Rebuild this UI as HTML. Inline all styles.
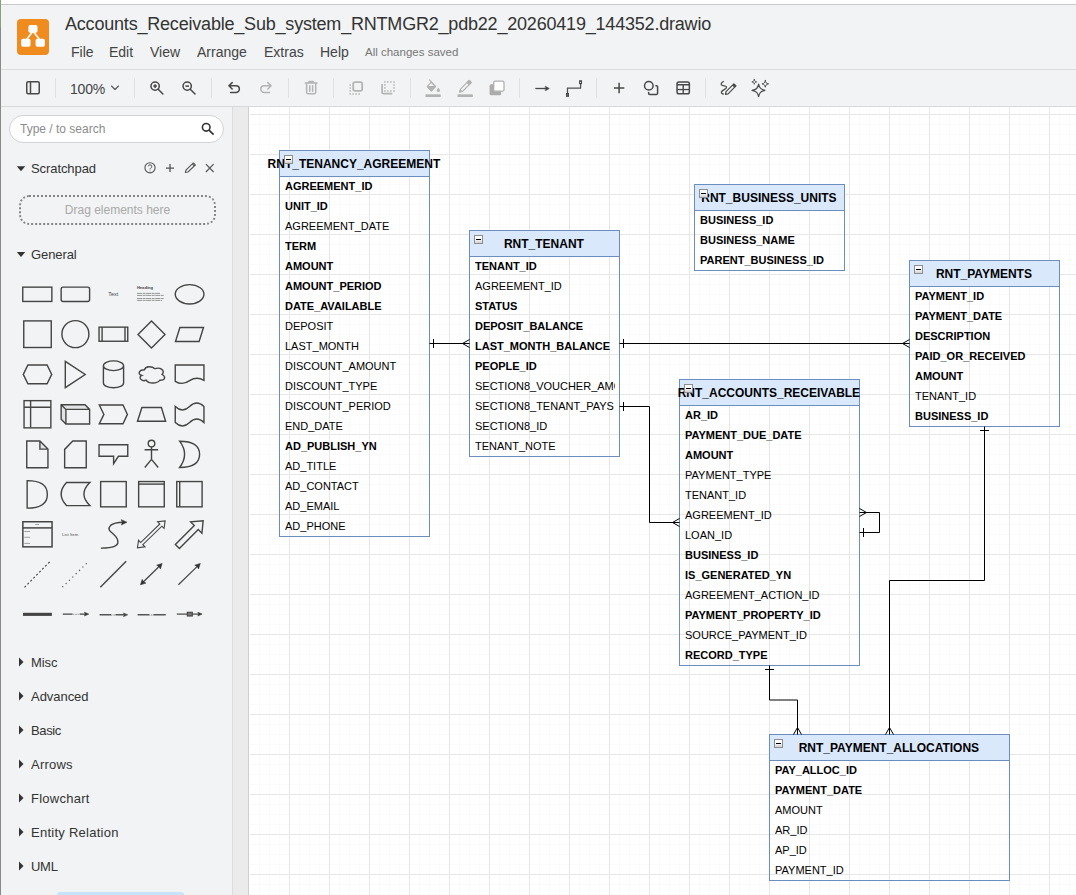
<!DOCTYPE html>
<html><head><meta charset="utf-8"><title>draw.io</title>
<style>
html,body{margin:0;padding:0}
body{width:1076px;height:895px;position:relative;overflow:hidden;background:#fff;font-family:"Liberation Sans",sans-serif;color:#000}
.abs{position:absolute}
#topline{left:0;top:4px;width:1076px;height:1px;background:#c9c9c9}
#leftcol{left:0;top:0;width:1px;height:895px;background:linear-gradient(#86a178 27px,#8a8a8a 28px)}
#wcol{left:249px;top:107px;width:1px;height:788px;background:#fff}
#hdr{left:1px;top:5px;width:1075px;height:64px;background:#f1f3f4}
#hline{left:1px;top:69px;width:1075px;height:1px;background:#dcdcdc}
#tbar{left:1px;top:70px;width:1075px;height:36px;background:#f1f3f4}
#tline{left:1px;top:106px;width:1075px;height:1px;background:#d9d9d9}
#side{left:1px;top:107px;width:231px;height:788px;background:#f1f3f4}
#sideb{left:232px;top:107px;width:1px;height:788px;background:#dcdcdc}
#split{left:233px;top:107px;width:15px;height:788px;background:#ebebeb}
#pgb{left:248px;top:107px;width:1px;height:788px;background:#cfcfcf}
#cv{left:249px;top:107px;width:827px;height:788px;background-color:#fff;
 background-image:linear-gradient(to right,#e7e7e7 1px,transparent 1px),linear-gradient(to bottom,#e7e7e7 1px,transparent 1px),linear-gradient(to right,#fbfbfb 1px,transparent 1px),linear-gradient(to bottom,#fbfbfb 1px,transparent 1px);
 background-size:40px 40px,40px 40px,10px 10px,10px 10px;
 background-position:0 7px,0 7px,0 7px,0 7px;}
#logo{left:17px;top:19px;width:32px;height:36px;background:#f08c1e;border-radius:4px}
#title{left:65px;top:13px;font-size:18px;letter-spacing:-0.2px;line-height:22px;color:#333;white-space:nowrap}
.mi{position:absolute;top:43px;font-size:14px;line-height:18px;color:#444;white-space:nowrap}
#saved{left:365px;top:45px;font-size:11.5px;line-height:14px;color:#777;white-space:nowrap}
.sep{position:absolute;top:78px;width:1px;height:20px;background:#dcdcdc}
.ic{position:absolute;overflow:visible}
.sl{position:absolute;left:31px;font-size:13px;line-height:16px;color:#333;white-space:nowrap}
/* tables */
.tb{position:absolute;box-sizing:border-box;border:1px solid #6c8ebf}
.th{position:absolute;left:0;top:0;height:25px;background:#dae8fc;border-bottom:1px solid #6c8ebf}
.tt{position:absolute;left:-1px;transform:translateX(-0.6px);top:0;height:26px;line-height:26px;font-size:12px;font-weight:bold;display:flex;justify-content:center;white-space:nowrap}
.tr{position:absolute;left:5px;height:20px;line-height:20px;font-size:11px;white-space:nowrap;overflow:hidden}
.tr.b{font-weight:bold}
.ci{position:absolute;left:4px;top:4px;width:9px;height:9px;box-sizing:border-box;border:1px solid #8e8e8e;background:linear-gradient(#fff,#fdfdfd 45%,#cfcfcf)}
.ci i{position:absolute;left:1px;top:3px;width:5px;height:1px;background:#000}
</style></head>
<body>
<div class="abs" id="topline"></div>
<div class="abs" id="hdr"></div>
<div class="abs" id="hline"></div>
<div class="abs" id="tbar"></div>
<div class="abs" id="tline"></div>
<div class="abs" id="side"></div>
<div class="abs" id="sideb"></div>
<div class="abs" id="split"></div>
<div class="abs" id="pgb"></div>
<div class="abs" id="cv"></div>
<div class="abs" id="leftcol"></div>
<div class="abs" id="wcol"></div>

<!-- header -->
<div class="abs" id="logo"></div>
<svg class="abs" style="left:17px;top:19px" width="32" height="36" viewBox="17 19 32 36"><path d="M32.3 32L26.6 39.5M33.7 32L39.6 39.5" stroke="#fff" stroke-width="1.6" fill="none"/><rect x="28.4" y="25" width="9.1" height="7.8" rx="1.8" fill="#fff"/><rect x="21.2" y="38.8" width="9.3" height="8" rx="1.8" fill="#fff"/><rect x="35.6" y="38.8" width="9.3" height="8" rx="1.8" fill="#fff"/></svg>
<div class="abs" id="title">Accounts_Receivable_Sub_system_RNTMGR2_pdb22_20260419_144352.drawio</div>
<div class="mi" style="left:71px">File</div>
<div class="mi" style="left:109px">Edit</div>
<div class="mi" style="left:150px">View</div>
<div class="mi" style="left:197px">Arrange</div>
<div class="mi" style="left:264px">Extras</div>
<div class="mi" style="left:320px">Help</div>
<div class="abs" id="saved">All changes saved</div>

<!-- toolbar -->
<svg class="abs" style="left:0;top:70px" width="1076" height="37" viewBox="0 70 1076 37" fill="none" stroke="#484848" stroke-width="1.5" stroke-linecap="round" stroke-linejoin="round">
<g stroke="#e1e1e1" stroke-width="1" stroke-linecap="butt">
<path d="M55.5 78V98M134.5 78V98M211.5 78V98M288.5 78V98M333.5 78V98M410.5 78V98M519.5 78V98M596.5 78V98M705.5 78V98"/>
</g>
<!-- sidebar toggle -->
<rect x="26.75" y="81.75" width="12.5" height="12" rx="1.5"/><path d="M30.5 82V93.5" stroke-linecap="butt"/>
<!-- chevron -->
<path d="M111.5 86L115 89.5L118.5 86" stroke-width="1.1" stroke="#555"/>
<!-- zoom in -->
<circle cx="155.1" cy="86.1" r="4.15"/><path d="M158.2 89.2L162.9 94"/><path d="M153.3 86.1H156.9M155.1 84.3V87.9" stroke-width="1.5" stroke-linecap="butt"/>
<!-- zoom out -->
<circle cx="187.2" cy="86.1" r="4.15"/><path d="M190.3 89.2L195 94"/><path d="M185.4 86.1H189" stroke-width="1.5" stroke-linecap="butt"/>
<!-- undo -->
<path d="M232.2 82.6L228.9 85.8L232.2 89M229 85.8H236A3.35 3.35 0 0 1 236 92.5H230.6"/>
<!-- redo -->
<g stroke="#b4b4b4"><path d="M267.8 82.6L271.1 85.8L267.8 89M271 85.8H264.2A3.35 3.35 0 0 0 264.2 92.5H269.6"/></g>
<!-- trash -->
<g stroke="#b4b4b4"><path d="M305.3 83H317M309 82.8V81.6H313.3V82.8M306.6 83.4V92.3A1.4 1.4 0 0 0 308 93.7H314.3A1.4 1.4 0 0 0 315.7 92.3V83.4M309.7 85.8V91.2M312.6 85.8V91.2"/></g>
<!-- to front -->
<g stroke="#b4b4b4" stroke-width="1.8"><rect x="353.2" y="82.1" width="9" height="8.8" rx="1.8"/><g fill="#b4b4b4" stroke="none"><rect x="349.45" y="84.35" width="1.5" height="1.5"/><rect x="349.45" y="87.30" width="1.5" height="1.5"/><rect x="349.45" y="90.25" width="1.5" height="1.5"/><rect x="349.45" y="93.25" width="1.5" height="1.5"/><rect x="352.35" y="93.25" width="1.5" height="1.5"/><rect x="355.35" y="93.25" width="1.5" height="1.5"/><rect x="358.45" y="93.25" width="1.5" height="1.5"/></g></g>
<!-- to back -->
<g stroke="#b4b4b4" stroke-width="1.7"><path d="M382.1 84.6V92.2A1.4 1.4 0 0 0 383.5 93.6H391.6"/><g fill="#b4b4b4" stroke="none"><rect x="384.15" y="81.15" width="1.5" height="1.5"/><rect x="384.15" y="84.15" width="1.5" height="1.5"/><rect x="384.15" y="87.15" width="1.5" height="1.5"/><rect x="384.15" y="90.25" width="1.5" height="1.5"/><rect x="387.15" y="81.15" width="1.5" height="1.5"/><rect x="387.15" y="90.25" width="1.5" height="1.5"/><rect x="390.15" y="81.15" width="1.5" height="1.5"/><rect x="390.15" y="90.25" width="1.5" height="1.5"/><rect x="393.25" y="81.15" width="1.5" height="1.5"/><rect x="393.25" y="84.15" width="1.5" height="1.5"/><rect x="393.25" y="87.15" width="1.5" height="1.5"/><rect x="393.25" y="90.25" width="1.5" height="1.5"/></g></g>
<!-- fill colour -->
<g stroke="#b2b2b2" stroke-width="1.2" stroke-linejoin="round"><rect x="425.5" y="94.3" width="15.2" height="2.7" fill="#b2b2b2" stroke="none"/><path d="M431.4 82.1L435.3 86.3L431.4 90.8L427.4 86.3Z"/><path d="M427.4 86.5H435.3L431.4 90.8Z" fill="#b2b2b2"/><path d="M429.2 79.6L435.3 86.3" stroke-linecap="butt"/><path d="M438.4 87.7s-1.6 1.8-1.6 2.8a1.6 1.6 0 0 0 3.2 0c0-1-1.6-2.8-1.6-2.8z" fill="#b2b2b2" stroke="none"/></g>
<!-- line colour -->
<g stroke="#b2b2b2" stroke-width="1.1" stroke-linejoin="round"><rect x="457.6" y="94.3" width="15.2" height="2.7" fill="#b2b2b2" stroke="none"/><g transform="translate(459.5 92.3) rotate(-45.5)"><path d="M0.3 0L3 -1.55H14.5A0.8 0.8 0 0 1 15.3 -0.75V0.75A0.8 0.8 0 0 1 14.5 1.55H3Z"/><path d="M0.3 0L2.2 -1.1V1.1Z" fill="#b2b2b2"/><path d="M12.2 -1.55H15.3V1.55H12.2Z" fill="#b2b2b2"/></g></g>
<!-- shadow -->
<g stroke="none"><rect x="489.6" y="84.2" width="11.5" height="11" rx="1.5" fill="#acacac"/><rect x="493.7" y="81.2" width="10.3" height="10" rx="1.5" fill="#fff" stroke="#b0b0b0" stroke-width="1.3"/></g>
<!-- arrow -->
<path d="M535.3 88.5H548" stroke-linecap="butt" stroke-width="1.3"/><path d="M545.6 86.3L549.3 88.5L545.6 90.7Z" fill="#444" stroke-width="0.5"/>
<!-- waypoints -->
<path d="M567.5 93.4V88.1H580.6V84" stroke-linecap="butt" stroke-linejoin="miter" stroke-width="1.25" stroke="#505050"/><rect x="566.55" y="93.5" width="1.9" height="2.8" stroke-width="1.1" stroke-linejoin="miter"/><rect x="579.6" y="80.8" width="1.9" height="2.8" stroke-width="1.1" stroke-linejoin="miter"/>
<!-- plus -->
<path d="M613.9 88H624.3M619.1 82.7V93.3" stroke-linecap="butt"/>
<!-- shapes -->
<circle cx="648.8" cy="85.8" r="4.3"/><path d="M648.6 92.6V93.2A1.2 1.2 0 0 0 649.8 94.4H656.4A1.2 1.2 0 0 0 657.6 93.2V86.9A1.2 1.2 0 0 0 656.4 85.7H655.9"/>
<!-- table -->
<rect x="677.05" y="81.95" width="12.3" height="11.9" rx="1.8"/><path d="M677.1 84.75H689.3M683.2 84.75V93.8" stroke-linecap="butt" stroke-width="1.4"/><path d="M677.1 89.55H689.3" stroke-linecap="butt" stroke-width="1.3"/>
<!-- freehand -->
<path d="M723.3 81.5C721.5 82.5 720.6 84 721.6 85C723 86.3 726.3 85.5 726.6 87.2C727 89 721.6 90 721.4 92C721.3 93.3 722.3 94 723.3 94" stroke-width="1.3"/>
<path d="M725.5 94.3l0.5-2.6 6.6-6.6 2.1 2.1-6.6 6.6z" stroke-width="1.2"/><path d="M733.2 84.5l0.7-0.7 2.1 2.1-0.7 0.7z" stroke-width="1.2" fill="#444"/>
<!-- sparkle -->
<path d="M758.6 84.2C759.4 88.2 760.8 89.5 764.9 90.4C760.8 91.3 759.4 92.6 758.6 96.7C757.8 92.6 756.4 91.3 752.1 90.4C756.4 89.5 757.8 88.2 758.6 84.2Z" stroke-width="1.2"/>
<path d="M765.3 80.6C765.7 82.8 766.3 83.4 768.5 83.9C766.3 84.4 765.7 85 765.3 87.2C764.9 85 764.3 84.4 762.1 83.9C764.3 83.4 764.9 82.8 765.3 80.6Z" stroke-width="1"/>
<path d="M754.3 79.5C754.6 81.1 755 81.5 756.7 81.9C755 82.3 754.6 82.7 754.3 84.3C754 82.7 753.6 82.3 751.9 81.9C753.6 81.5 754 81.1 754.3 79.5Z" stroke-width="0.9"/>
</svg>
<div class="abs" style="left:70px;top:80px;font-size:14px;line-height:18px;color:#444;letter-spacing:-0.2px">100%</div>

<!-- sidebar -->
<div class="abs" style="left:9px;top:115px;width:215px;height:28px;box-sizing:border-box;border:1px solid #d4d4d4;border-radius:14px;background:#fff"></div>
<div class="abs" style="left:20px;top:122px;font-size:12px;line-height:14px;color:#8c8c8c;white-space:nowrap">Type / to search</div>
<div class="sl" style="top:161px;letter-spacing:-0.08px">Scratchpad</div>
<div class="abs" style="left:19px;top:195px;width:197px;height:30px;box-sizing:border-box;border:2px dotted #858585;border-radius:10px"></div>
<div class="abs" style="left:19px;top:203px;width:197px;text-align:center;font-size:12px;line-height:14px;color:#a9a9a9;white-space:nowrap">Drag elements here</div>
<div class="sl" style="top:247px;letter-spacing:-0.09px">General</div>
<div class="sl" style="top:655px;letter-spacing:-0.08px">Misc</div>
<div class="sl" style="top:689px;letter-spacing:-0.04px">Advanced</div>
<div class="sl" style="top:723px;letter-spacing:-0.36px">Basic</div>
<div class="sl" style="top:757px;letter-spacing:0.22px">Arrows</div>
<div class="sl" style="top:791px;letter-spacing:0.26px">Flowchart</div>
<div class="sl" style="top:825px;letter-spacing:0.26px">Entity Relation</div>
<div class="sl" style="top:859px;letter-spacing:-0.28px">UML</div>
<div class="abs" style="left:57px;top:892px;width:127px;height:6px;background:#c6e3fa;border-radius:3px"></div>
<svg class="abs" style="left:0;top:107px" width="232" height="788" viewBox="0 107 232 788" fill="none" stroke="#444" stroke-width="1.4" font-family="Liberation Sans, sans-serif">
<!-- search icon -->
<circle cx="206.2" cy="127.3" r="3.8" stroke="#333" stroke-width="1.6"/><path d="M209 130.1L213.6 134.6" stroke="#333" stroke-width="1.7"/>
<!-- section arrows -->
<g fill="#333" stroke="none">
<path d="M16.8 166.2H25.2L21 171.3Z"/><path d="M16.8 252H25.2L21 257.1Z"/>
<path d="M19 657.5L23.5 662L19 666.5Z"/><path d="M19 691.5L23.5 696L19 700.5Z"/><path d="M19 725.5L23.5 730L19 734.5Z"/><path d="M19 759.5L23.5 764L19 768.5Z"/><path d="M19 793.5L23.5 798L19 802.5Z"/><path d="M19 827.5L23.5 832L19 836.5Z"/><path d="M19 861.5L23.5 866L19 870.5Z"/>
</g>
<!-- scratchpad icons -->
<g stroke="#555" stroke-width="1.1">
<circle cx="150" cy="167.8" r="5.1"/><path d="M148.3 166.3A1.75 1.75 0 1 1 150.6 168.2Q150 168.5 150 169.4M150 170.6V171.3" stroke-width="1"/>
<path d="M166 168.1H174M170 164.1V172.1" stroke-width="1.3"/>
<path d="M185.4 172.4L186 170L193.3 162.9L195.4 165L188 172Z M192.3 163.9L194.4 166" stroke-width="1.1"/>
<path d="M205.9 164.2L213.6 172M213.6 164.2L205.9 172" stroke-width="1.2"/>
</g>
<!-- row 1 -->
<rect x="22.75" y="287.15" width="29.1" height="14.3"/>
<rect x="61.15" y="287.15" width="28.45" height="14.3" rx="2"/>
<text x="113.2" y="296" font-size="5.4" text-anchor="middle" fill="#444" stroke="none">Text</text>
<text x="136.9" y="288.6" font-size="4.1" font-weight="bold" fill="#444" stroke="none">Heading</text>
<path d="M137 293.4H160M137 295.4H163.7M137 298.5H163.7M137 300.4H162" stroke="#707070" stroke-width="0.7" stroke-dasharray="5 0.6 3 0.5"/>
<ellipse cx="189.6" cy="294.3" rx="14.35" ry="9.65"/>
<!-- row 2 -->
<rect x="23.75" y="320.9" width="27.5" height="26.6"/>
<circle cx="75.4" cy="334.1" r="13.5"/>
<rect x="99.05" y="327.15" width="28.7" height="14.1"/><path d="M102.1 327.2V341.2M125 327.2V341.2"/>
<path d="M151.5 320.9L165 334.4L151.5 347.9L138 334.4Z"/>
<path d="M179.9 327.55H203.5L199.1 341.45H175.5Z"/>
<!-- row 3 -->
<path d="M23.3 374.4L27.9 365.05H47.1L51.7 374.4L47.1 383.75H27.9Z"/>
<path d="M65.3 361.4L85.2 374.5L65.3 387.6Z"/>
<path d="M103.4 365.75A10.1 4.85 0 0 1 123.6 365.75V382.9A10.1 4.85 0 0 1 103.4 382.9ZM103.4 365.75A10.1 4.85 0 0 0 123.6 365.75"/>
<path d="M144.4 369.7C138.7 369.7 137.3 374.5 141.8 375.4C137.3 377.5 142.4 382.1 146.1 380.2C148.6 384.0 157.1 384.0 160.0 380.2C165.7 380.2 165.7 376.4 162.1 374.5C165.7 370.6 160.0 366.8 155.0 368.7C151.5 365.9 145.8 365.9 144.4 369.7Z"/>
<path d="M175.25 365.05H203.95V380.3Q196.8 376 189.6 380.6Q182.4 385.8 175.25 381.3Z"/>
<!-- row 4 -->
<rect x="24.05" y="400.65" width="26.8" height="27.2"/><path d="M30.6 400.7V427.8M24.1 407.25H50.8"/>
<path d="M61.15 404.75L65.9 409.4H89.6L85 404.75ZM61.15 404.75L65.9 409.4V423.95L61.15 419.3Z" fill="#e3e4e5" stroke="none"/>
<path d="M61.15 404.75H85L89.6 409.4V423.95H65.9L61.15 419.3ZM61.15 404.75L65.9 409.4H89.6M65.9 409.4V423.95"/>
<path d="M99.3 405.05H123L127.4 414.4L123 423.75H99.3L103.9 414.4Z"/>
<path d="M137.5 421.25L141.9 407.55H161.4L165.6 421.25Z"/>
<path d="M175.25 406.5Q182.4 413.5 189.6 406.5Q196.8 399.5 203.95 406.5V422.5Q196.8 415.5 189.6 422.5Q182.4 429.5 175.25 422.5Z"/>
<!-- row 5 -->
<path d="M39.9 441.05V449.1H47.95Z" fill="#e3e4e5" stroke="none"/>
<path d="M26.75 441.05H39.9L47.95 449.1V467.75H26.75ZM39.9 441.05V449.1H47.95"/>
<path d="M72.75 441.05H86.25V467.75H64.65V449.4Z"/>
<path d="M99.05 444.75H127.75V456.3H118.4L113.6 463.6V456.3H99.05Z"/>
<circle cx="151.5" cy="443.6" r="3.3"/><path d="M151.5 446.9V459.4M144.6 449.75H158.1M151.5 459.4L144.8 467.5M151.5 459.4L158.2 467.5"/>
<path d="M179.6 441.2Q199.6 441.2 199.6 454.35Q199.6 467.5 179.6 467.5Q189.6 454.35 179.6 441.2Z"/>
<!-- row 6 -->
<path d="M27.15 480.65Q47.35 480.65 47.35 494.4Q47.35 508.1 27.15 508.1Z"/>
<path d="M66.5 482.55H89.85Q78 494.1 89.85 505.6H66.5Q55.8 494.1 66.5 482.55Z"/>
<rect x="100.65" y="481.55" width="25.6" height="25.3"/>
<rect x="138.65" y="481.55" width="25.6" height="25.3"/><path d="M138.7 484.1H164.2"/>
<rect x="176.75" y="481.55" width="25.35" height="25.3"/><path d="M179.7 481.6V506.8"/>
<!-- row 7 -->
<rect x="22.85" y="521.75" width="29.2" height="25.1" stroke-width="1.5"/><path d="M22.9 527.9H52" stroke-width="1.5"/>
<path d="M35.3 524.5H39M24.3 531.5H30M24.3 537.3H30M24.3 543.4H30" stroke="#666" stroke-width="0.6"/>
<text x="62" y="535.7" font-size="4.3" fill="#555" stroke="none">List Item</text>
<path d="M100.9 548.1C112 548.1 120.5 546.5 117.3 539C114.6 532.8 105.2 530.8 110.6 525.4C113.6 522.8 119 522.4 123.5 522.3"/>
<path d="M126.9 522.2L121.2 519.7L122.5 522.3L121.4 524.9Z" fill="#333" stroke="#333" stroke-width="0.6"/>
<g transform="translate(151.3 534.35) rotate(-44.1)"><path d="M-19.3 0L-13.3 -4.6V-1.5H13.3V-4.6L19.3 0L13.3 4.6V1.5H-13.3V4.6Z" stroke-width="1.1"/></g>
<g transform="translate(177.4 546.45) rotate(-45)"><path d="M0 -2.8H26.7V-8L36.4 0L26.7 8V2.8H0Z"/></g>
<!-- row 8 -->
<path d="M24.5 587.3L50 561.5" stroke-dasharray="2 2.2" stroke-width="1.15"/>
<path d="M62.4 587.2L86.7 563.3" stroke-dasharray="1.1 3.6" stroke-width="1.15"/>
<path d="M100.3 587.2L126.2 561.3"/>
<path d="M143 582.3L159.6 566" stroke-width="1.2"/><path d="M140.5 584.75L142.2 579.4L143.5 581.8L145.9 583.1Z M162.1 563.5L160.4 568.9L159.1 566.5L156.7 565.2Z" fill="#333" stroke="#333" stroke-width="0.6"/>
<path d="M178.4 584.75L197.8 565.9" stroke-width="1.2"/><path d="M200.25 563.5L198.5 568.9L197.2 566.5L194.8 565.2Z" fill="#333" stroke="#333" stroke-width="0.6"/>
<!-- row 9 -->
<rect x="23" y="612.8" width="28.9" height="3.1" fill="#444" stroke="none"/>
<path d="M62.8 614.1H72.6M79.6 614.1H86" stroke-width="1.2"/><path d="M73.2 614.3H79" stroke="#888" stroke-width="0.9" stroke-dasharray="1 0.5"/><path d="M88.8 614.1L84.4 612.2L85.4 614.1L84.4 616Z" fill="#333" stroke="#333" stroke-width="0.5"/>
<path d="M99.6 614.8H111M115.5 614.8H125" stroke="#555" stroke-width="1.5"/><path d="M111 615H115.5" stroke="#777" stroke-width="0.9" stroke-dasharray="1 0.6"/><path d="M127.8 614.8L123.4 612.9L124.4 614.8L123.4 616.7Z" fill="#444" stroke="#444" stroke-width="0.5"/>
<path d="M137.6 614.8H149.3M153.5 614.8H165.7" stroke="#555" stroke-width="1.5"/><path d="M149.3 615H153.5" stroke="#777" stroke-width="0.9" stroke-dasharray="1 0.6"/>
<path d="M176.8 614.1H199" stroke-width="1.2"/><rect x="187.3" y="612.3" width="5" height="3.7" fill="#777" stroke-width="1.1"/><path d="M202.2 614.1L197.8 612.2L198.8 614.1L197.8 616Z" fill="#333" stroke="#333" stroke-width="0.5"/>
</svg>


<!-- diagram -->
<div class="tb" style="left:279px;top:150px;width:151px;height:387px">
<div class="th" style="width:149px"></div>
<div class="tt" style="width:151px">RNT_TENANCY_AGREEMENT</div>
<div class="ci"><i></i></div>
<div class="tr b" style="top:25px;width:140px">AGREEMENT_ID</div>
<div class="tr b" style="top:45px;width:140px">UNIT_ID</div>
<div class="tr" style="top:65px;width:140px">AGREEMENT_DATE</div>
<div class="tr b" style="top:85px;width:140px">TERM</div>
<div class="tr b" style="top:105px;width:140px">AMOUNT</div>
<div class="tr b" style="top:125px;width:140px">AMOUNT_PERIOD</div>
<div class="tr b" style="top:145px;width:140px">DATE_AVAILABLE</div>
<div class="tr" style="top:165px;width:140px">DEPOSIT</div>
<div class="tr" style="top:185px;width:140px">LAST_MONTH</div>
<div class="tr" style="top:205px;width:140px">DISCOUNT_AMOUNT</div>
<div class="tr" style="top:225px;width:140px">DISCOUNT_TYPE</div>
<div class="tr" style="top:245px;width:140px">DISCOUNT_PERIOD</div>
<div class="tr" style="top:265px;width:140px">END_DATE</div>
<div class="tr b" style="top:285px;width:140px">AD_PUBLISH_YN</div>
<div class="tr" style="top:305px;width:140px">AD_TITLE</div>
<div class="tr" style="top:325px;width:140px">AD_CONTACT</div>
<div class="tr" style="top:345px;width:140px">AD_EMAIL</div>
<div class="tr" style="top:365px;width:140px">AD_PHONE</div>
</div>
<div class="tb" style="left:469px;top:230px;width:151px;height:227px">
<div class="th" style="width:149px"></div>
<div class="tt" style="width:151px">RNT_TENANT</div>
<div class="ci"><i></i></div>
<div class="tr b" style="top:25px;width:140px">TENANT_ID</div>
<div class="tr" style="top:45px;width:140px">AGREEMENT_ID</div>
<div class="tr b" style="top:65px;width:140px">STATUS</div>
<div class="tr b" style="top:85px;width:140px">DEPOSIT_BALANCE</div>
<div class="tr b" style="top:105px;width:140px">LAST_MONTH_BALANCE</div>
<div class="tr b" style="top:125px;width:140px">PEOPLE_ID</div>
<div class="tr" style="top:145px;width:140px">SECTION8_VOUCHER_AMOUNT</div>
<div class="tr" style="top:165px;width:140px">SECTION8_TENANT_PAYS</div>
<div class="tr" style="top:185px;width:140px">SECTION8_ID</div>
<div class="tr" style="top:205px;width:140px">TENANT_NOTE</div>
</div>
<div class="tb" style="left:694px;top:184px;width:151px;height:87px">
<div class="th" style="width:149px"></div>
<div class="tt" style="width:151px">RNT_BUSINESS_UNITS</div>
<div class="ci"><i></i></div>
<div class="tr b" style="top:25px;width:140px">BUSINESS_ID</div>
<div class="tr b" style="top:45px;width:140px">BUSINESS_NAME</div>
<div class="tr b" style="top:65px;width:140px">PARENT_BUSINESS_ID</div>
</div>
<div class="tb" style="left:909px;top:260px;width:151px;height:167px">
<div class="th" style="width:149px"></div>
<div class="tt" style="width:151px">RNT_PAYMENTS</div>
<div class="ci"><i></i></div>
<div class="tr b" style="top:25px;width:140px">PAYMENT_ID</div>
<div class="tr b" style="top:45px;width:140px">PAYMENT_DATE</div>
<div class="tr b" style="top:65px;width:140px">DESCRIPTION</div>
<div class="tr b" style="top:85px;width:140px">PAID_OR_RECEIVED</div>
<div class="tr b" style="top:105px;width:140px">AMOUNT</div>
<div class="tr" style="top:125px;width:140px">TENANT_ID</div>
<div class="tr b" style="top:145px;width:140px">BUSINESS_ID</div>
</div>
<div class="tb" style="left:679px;top:379px;width:181px;height:287px">
<div class="th" style="width:179px"></div>
<div class="tt" style="width:181px">RNT_ACCOUNTS_RECEIVABLE</div>
<div class="ci"><i></i></div>
<div class="tr b" style="top:25px;width:170px">AR_ID</div>
<div class="tr b" style="top:45px;width:170px">PAYMENT_DUE_DATE</div>
<div class="tr b" style="top:65px;width:170px">AMOUNT</div>
<div class="tr" style="top:85px;width:170px">PAYMENT_TYPE</div>
<div class="tr" style="top:105px;width:170px">TENANT_ID</div>
<div class="tr" style="top:125px;width:170px">AGREEMENT_ID</div>
<div class="tr" style="top:145px;width:170px">LOAN_ID</div>
<div class="tr b" style="top:165px;width:170px">BUSINESS_ID</div>
<div class="tr b" style="top:185px;width:170px">IS_GENERATED_YN</div>
<div class="tr" style="top:205px;width:170px">AGREEMENT_ACTION_ID</div>
<div class="tr b" style="top:225px;width:170px">PAYMENT_PROPERTY_ID</div>
<div class="tr" style="top:245px;width:170px">SOURCE_PAYMENT_ID</div>
<div class="tr b" style="top:265px;width:170px">RECORD_TYPE</div>
</div>
<div class="tb" style="left:769px;top:734px;width:241px;height:147px">
<div class="th" style="width:239px"></div>
<div class="tt" style="width:241px">RNT_PAYMENT_ALLOCATIONS</div>
<div class="ci"><i></i></div>
<div class="tr b" style="top:25px;width:230px">PAY_ALLOC_ID</div>
<div class="tr b" style="top:45px;width:230px">PAYMENT_DATE</div>
<div class="tr" style="top:65px;width:230px">AMOUNT</div>
<div class="tr" style="top:85px;width:230px">AR_ID</div>
<div class="tr" style="top:105px;width:230px">AP_ID</div>
<div class="tr" style="top:125px;width:230px">PAYMENT_ID</div>
</div>
<svg class="abs" style="left:0;top:0" width="1076" height="895" viewBox="0 0 1076 895" fill="none" stroke="#000" stroke-width="1">
<path d="M429.5 343.5H469.5M433.5 339V348M469.5 339.5L462.5 343.5L469.5 347.5"/>
<path d="M619.5 343.5H909.5M623.5 339V348M909.5 339.5L902.5 343.5L909.5 347.5"/>
<path d="M619.5 406.5H649.5V522.5H679.5M623.5 402V411M679.5 518.5L672.5 522.5L679.5 526.5"/>
<path d="M859.5 512.5H879.5V532.5H859.5M859.5 508.5L866.5 512.5L859.5 516.5M863.5 528V537"/>
<path d="M769.5 665.5V700H797.5V734.5M765 669.5H774M793.5 734.5L797.5 727.5L801.5 734.5"/>
<path d="M984.5 426.5V580.5H889.5V734.5M980 430.5H989M885.5 734.5L889.5 727.5L893.5 734.5"/>
</svg>
</body></html>
